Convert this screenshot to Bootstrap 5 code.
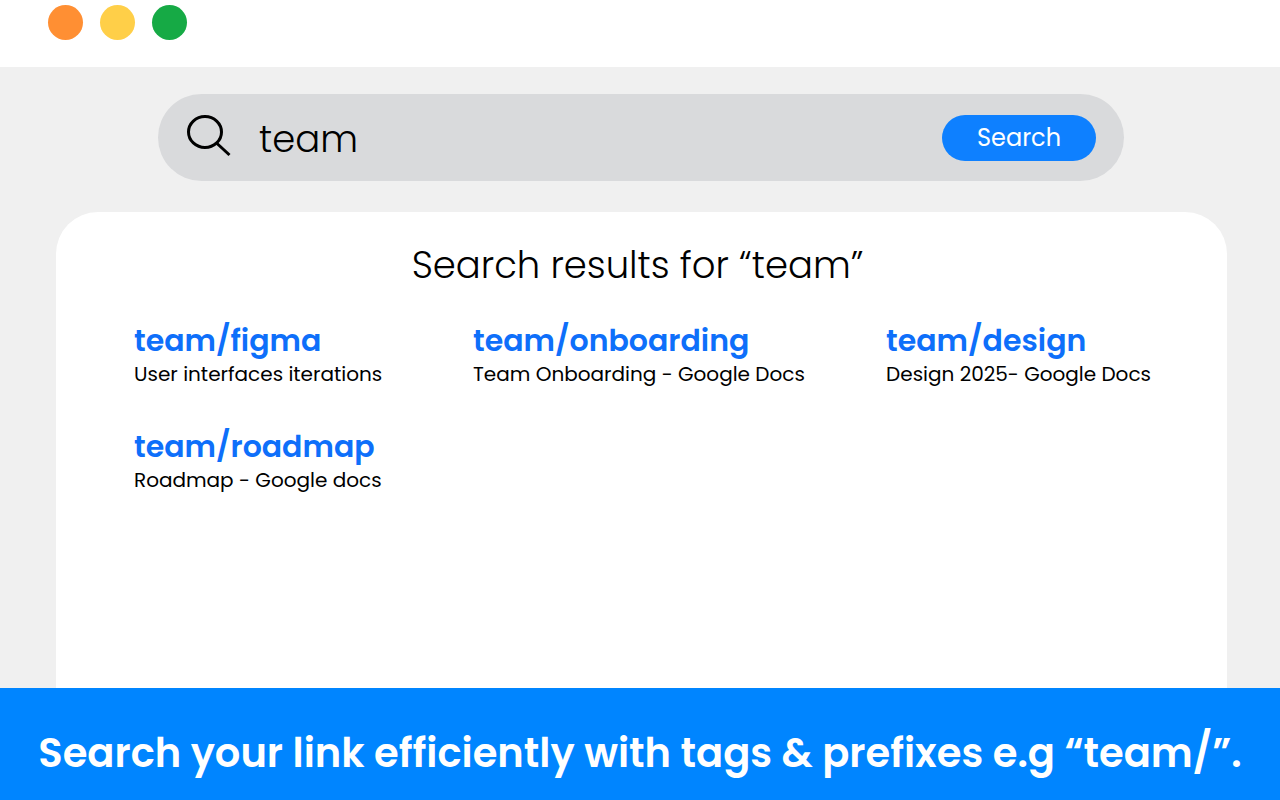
<!DOCTYPE html>
<html lang="en">
<head>
<meta charset="utf-8">
<meta name="viewport" content="width=device-width, initial-scale=1">
<title>Search results</title>
<link href="https://cdn.jsdelivr.net/npm/bootstrap@5.3.0/dist/css/bootstrap.min.css" rel="stylesheet">
<script src="https://cdn.jsdelivr.net/npm/bootstrap@5.3.0/dist/js/bootstrap.bundle.min.js" defer></script>
<style>
  body { background: #f0f0f0; color: #000; font-family: Poppins, Inter, "Open Sans", sans-serif; }
  .window-bar { height: 67px; padding: 5px 48px; gap: 17px; }
  .dot { width: 35px; height: 35px; border-radius: 50%; }
  .dot-close { background: #ff8f33; }
  .dot-min { background: #ffcf48; }
  .dot-max { background: #16aa45; }
  .search-box { height: 87px; margin: 27px 156px 31px 158px; padding: 0 28px; border-radius: 44px; background: #d9dadc; }
  .search-input { font-family: inherit; font-weight: 300; font-size: 37px; line-height: 58px; color: #000; background: transparent; border: 0; outline: 0; padding: 2px 0 0; margin-left: 27px; min-width: 0; }
  .search-btn { width: 154px; height: 46px; font-size: 24px; line-height: 32px; font-family: inherit; color: #fff; background: #0e80ff; border: 0; padding: 0; border-radius: 23px; }
  .search-btn:hover { color: #fff; background: #0070eb; }
  .results { margin: 0 53px 0 56px; border-radius: 42px 42px 0 0; padding: 29px 76px 40px 78px; }
  .results-title { font-weight: 300; font-size: 37px; line-height: 48px; margin: 0 0 33px; padding-right: 10px; }
  .results-grid { display: grid; grid-template-columns: 339fr 413fr 264fr; row-gap: 40px; }
  .result-link { display: block; font-size: 30px; line-height: 38px; font-weight: 600; color: #0e6ffa; text-decoration: none; white-space: nowrap; }
  .result-note { font-size: 20px; line-height: 28px; margin: 0; white-space: nowrap; }
  .banner { background: #0085ff; color: #fff; min-height: 112px; padding-top: 18px; font-size: 40px; line-height: 48px; font-weight: 600; }
</style>
</head>
<body class="min-vh-100 d-flex flex-column">
  <header class="window-bar bg-white d-flex">
    <span class="dot dot-close"></span><span class="dot dot-min"></span><span class="dot dot-max"></span>
  </header>
  <form class="search-box d-flex align-items-center flex-shrink-0">
    <svg class="flex-shrink-0" width="46" height="46" viewBox="0 0 46 46" fill="none" stroke="#000" stroke-width="3" aria-hidden="true"><ellipse cx="19" cy="17" rx="16.5" ry="15.5"/><path d="M30.500 28 43.500 40"/></svg>
    <input class="search-input flex-grow-1" type="text" value="team" aria-label="Search">
    <button class="search-btn btn flex-shrink-0" type="button">Search</button>
  </form>
  <main class="results bg-white flex-grow-1">
    <h1 class="results-title text-center">Search results for “team”</h1>
    <div class="results-grid">
      <div><a class="result-link" href="#">team/figma</a><p class="result-note">User interfaces iterations</p></div>
      <div><a class="result-link" href="#">team/onboarding</a><p class="result-note">Team Onboarding - Google Docs</p></div>
      <div><a class="result-link" href="#">team/design</a><p class="result-note">Design 2025- Google Docs</p></div>
      <div><a class="result-link" href="#">team/roadmap</a><p class="result-note">Roadmap - Google docs</p></div>
    </div>
  </main>
  <footer class="banner d-flex align-items-center justify-content-center">Search your link efficiently with tags &amp; prefixes e.g “team/”.</footer>
</body>
</html>
